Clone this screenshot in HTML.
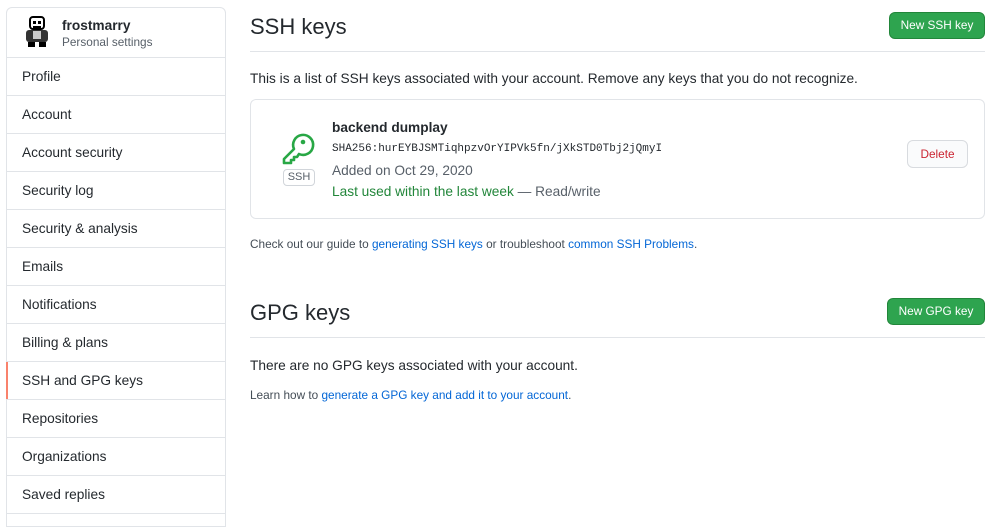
<!DOCTYPE html>
<html><head><meta charset="utf-8"><style>
*{box-sizing:border-box;margin:0;padding:0}
body{width:1007px;height:513px;overflow:hidden;background:#fff;font-family:"Liberation Sans",sans-serif;color:#24292e;position:relative}
.side{position:absolute;left:6px;top:7px;width:220px;height:520px;border:1px solid #e1e4e8;border-radius:6px 6px 0 0}
.hd{height:50px;border-bottom:1px solid #e1e4e8;position:relative}
.hd .n{position:absolute;left:55px;top:10px;font-weight:bold;font-size:13.7px}
.hd .s{position:absolute;left:55px;top:27px;font-size:11.8px;color:#586069}
.it{height:38px;border-bottom:1px solid #e1e4e8;padding-left:15px;line-height:38px;font-size:13.7px;position:relative}
.it.a:before{content:"";position:absolute;left:-1px;top:0;bottom:0;width:2px;background:#f9826c}
.ab{position:absolute}
h2{position:absolute;font-weight:normal;font-size:22px;left:250px}
.btn{position:absolute;background:#2ea44f;color:#fff;font-size:11.8px;border:1px solid #22863a;border-radius:6px;text-align:center}
.hr{position:absolute;left:250px;width:735px;height:1px;background:#e1e4e8}
a{color:#0366d6;text-decoration:none}
</style></head><body>
<div class="side">
 <div class="hd">
  <svg style="position:absolute;left:17px;top:8px" width="26" height="32" viewBox="0 0 26 32"><rect x="6" y="1" width="14" height="12" rx="3" fill="#fff" stroke="#000" stroke-width="2"/><rect x="9" y="5" width="3" height="3" fill="#000"/><rect x="14" y="5" width="3" height="3" fill="#000"/><rect x="9" y="10" width="8" height="2" fill="#000"/><rect x="2" y="14" width="22" height="12" rx="3" fill="#333"/><rect x="9" y="15" width="8" height="8" fill="#ccc"/><rect x="4" y="26" width="7" height="5" fill="#000"/><rect x="15" y="26" width="7" height="5" fill="#000"/></svg>
  <div class="n">frostmarry</div><div class="s">Personal settings</div>
 </div>
 <div class="it">Profile</div><div class="it">Account</div><div class="it">Account security</div><div class="it">Security log</div><div class="it">Security &amp; analysis</div><div class="it">Emails</div><div class="it">Notifications</div><div class="it">Billing &amp; plans</div><div class="it a">SSH and GPG keys</div><div class="it">Repositories</div><div class="it">Organizations</div><div class="it">Saved replies</div>
</div>
<h2 style="top:14px">SSH keys</h2>
<div class="btn" style="left:889px;top:12px;width:96px;height:27px;line-height:25px">New SSH key</div>
<div class="hr" style="top:51px"></div>
<div class="ab" style="left:250px;top:71px;font-size:13.7px">This is a list of SSH keys associated with your account. Remove any keys that you do not recognize.</div>
<div class="ab" style="left:250px;top:99px;width:735px;height:120px;border:1px solid #e1e4e8;border-radius:6px"></div>
<svg class="ab" style="left:280px;top:132px" width="36" height="34" viewBox="0 0 36 34" fill="none" stroke="#28a745" stroke-width="2.6" stroke-linejoin="round"><path d="M14 19 A10 10 0 1 1 19 24 L17 27 L14 27 L14 30 L11 30 L11 33 L4 33 L4 29 Z" transform="translate(0,-2)"/><circle cx="23" cy="10" r="2.3" fill="#28a745" stroke="none"/></svg>
<div class="ab" style="left:283px;top:169px;width:32px;height:17px;border:1px solid #d1d5da;border-radius:4px;font-size:11px;color:#586069;text-align:center;line-height:15px">SSH</div>
<div class="ab" style="left:332px;top:120px;font-size:13.7px;font-weight:bold">backend dumplay</div>
<div class="ab" style="left:332px;top:143px;font-size:11px;font-family:'Liberation Mono',monospace">SHA256:hurEYBJSMTiqhpzvOrYIPVk5fn/jXkSTD0Tbj2jQmyI</div>
<div class="ab" style="left:332px;top:163px;font-size:13.7px;color:#586069">Added on Oct 29, 2020</div>
<div class="ab" style="left:332px;top:184px;font-size:13.7px;color:#586069"><span style="color:#22863a">Last used within the last week</span> — Read/write</div>
<div class="ab" style="left:907px;top:140px;width:61px;height:28px;border:1px solid #d8dbdf;border-radius:6px;background:#fafbfc;color:#cb2431;font-size:11.8px;text-align:center;line-height:27px">Delete</div>
<div class="ab" style="left:250px;top:237px;font-size:11.8px;color:#444d56">Check out our guide to <a>generating SSH keys</a> or troubleshoot <a>common SSH Problems</a>.</div>
<h2 style="top:300px">GPG keys</h2>
<div class="btn" style="left:887px;top:298px;width:98px;height:27px;line-height:25px">New GPG key</div>
<div class="hr" style="top:337px"></div>
<div class="ab" style="left:250px;top:358px;font-size:13.7px">There are no GPG keys associated with your account.</div>
<div class="ab" style="left:250px;top:388px;font-size:11.8px;color:#444d56">Learn how to <a>generate a GPG key and add it to your account</a>.</div>
</body></html>
